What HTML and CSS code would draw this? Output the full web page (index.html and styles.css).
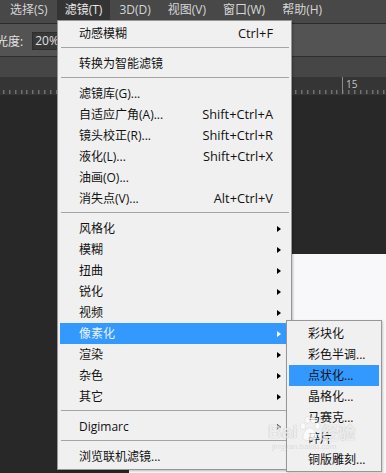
FILE: index.html
```html
<!DOCTYPE html>
<html lang="zh-CN">
<head>
<meta charset="utf-8">
<title>滤镜菜单</title>
<link rel="stylesheet" href="styles.css">
</head>
<body>
<div class="app">
  <div class="menubar">
    <span class="mb-item">选择(S)</span>
    <span class="mb-item active">滤镜(T)</span>
    <span class="mb-item">3D(D)</span>
    <span class="mb-item">视图(V)</span>
    <span class="mb-item">窗口(W)</span>
    <span class="mb-item">帮助(H)</span>
  </div>
  <div class="options">
    <span class="opt-label">光度:</span>
    <span class="opt-input">20%</span>
  </div>
  <div class="doctabs"></div>
  <div class="ruler"><span class="ruler-mark"></span><span class="ruler-num">15</span></div>
  <div class="workspace"><div class="doc"></div></div>

  <div class="menu">
    <div class="mi"><span>动感模糊</span><span class="sc">Ctrl+F</span></div>
    <div class="sep"></div>
    <div class="mi"><span>转换为智能滤镜</span></div>
    <div class="sep"></div>
    <div class="mi"><span>滤镜库(G)...</span></div>
    <div class="mi"><span>自适应广角(A)...</span><span class="sc">Shift+Ctrl+A</span></div>
    <div class="mi"><span>镜头校正(R)...</span><span class="sc">Shift+Ctrl+R</span></div>
    <div class="mi"><span>液化(L)...</span><span class="sc">Shift+Ctrl+X</span></div>
    <div class="mi"><span>油画(O)...</span></div>
    <div class="mi"><span>消失点(V)...</span><span class="sc">Alt+Ctrl+V</span></div>
    <div class="sep"></div>
    <div class="mi"><span>风格化</span><span></span><i class="arrow"></i></div>
    <div class="mi"><span>模糊</span><span></span><i class="arrow"></i></div>
    <div class="mi"><span>扭曲</span><span></span><i class="arrow"></i></div>
    <div class="mi"><span>锐化</span><span></span><i class="arrow"></i></div>
    <div class="mi"><span>视频</span><span></span><i class="arrow"></i></div>
    <div class="mi hl"><span>像素化</span><span></span><i class="arrow"></i></div>
    <div class="mi"><span>渲染</span><span></span><i class="arrow"></i></div>
    <div class="mi"><span>杂色</span><span></span><i class="arrow"></i></div>
    <div class="mi"><span>其它</span><span></span><i class="arrow"></i></div>
    <div class="sep"></div>
    <div class="mi"><span>Digimarc</span><span></span><i class="arrow"></i></div>
    <div class="sep"></div>
    <div class="mi"><span>浏览联机滤镜...</span></div>
  </div>

  <div class="submenu">
    <div class="si">彩块化</div>
    <div class="si">彩色半调...</div>
    <div class="si hl">点状化...</div>
    <div class="si">晶格化...</div>
    <div class="si">马赛克...</div>
    <div class="si">碎片</div>
    <div class="si">铜版雕刻...</div>
  </div>

  <div class="watermark">
    <div class="wm-row">
      <span class="wm-bai">Bai</span>
      <svg class="wm-paw" width="22" height="26" viewBox="0 0 22 26">
        <ellipse cx="4" cy="10" rx="2.6" ry="3.4"/>
        <ellipse cx="8.5" cy="4" rx="2.6" ry="3.4"/>
        <ellipse cx="14" cy="4" rx="2.6" ry="3.4"/>
        <ellipse cx="18.5" cy="10" rx="2.6" ry="3.4"/>
        <path d="M11 12 C7 12 4 18 4 21 C4 24 7 25 11 24 C15 25 18 24 18 21 C18 18 15 12 11 12 Z"/>
      </svg>
      <span class="wm-jy">经验</span>
    </div>
    <div class="wm-url">jingyan.baidu.com</div>
  </div>
</div>
</body>
</html>
```
FILE: styles.css
```css
html, body {
  margin: 0;
  padding: 0;
}
body {
  width: 386px;
  height: 473px;
  overflow: hidden;
  background: #282828;
  font-family: "Open Sans", "Noto Sans CJK SC", sans-serif;
  font-size: 12px;
}
.app {
  position: relative;
  width: 386px;
  height: 473px;
  display: flex;
  flex-direction: column;
}
.menubar {
  height: 24px;
  flex: none;
  box-sizing: border-box;
  background: #484848;
  border-bottom: 1px solid #2b2b2b;
  display: flex;
  align-items: flex-start;
  padding-left: 2px;
  gap: 1px;
}
.mb-item {
  height: 20px;
  line-height: 20px;
  padding: 0 8px;
  color: #d6d6d6;
  white-space: nowrap;
}
.mb-item.active {
  background: #343434;
  color: #e8e8e8;
}
.options {
  height: 33px;
  flex: none;
  box-sizing: border-box;
  background: #535353;
  border-bottom: 1px solid #2e2e2e;
  display: flex;
  align-items: center;
  padding-top: 1px;
}
.opt-label {
  margin-left: -4px;
  color: #e2e2e2;
}
.opt-input {
  margin-left: 9px;
  width: 40px;
  height: 18px;
  box-sizing: border-box;
  background: #383838;
  border: 1px solid #2e2e2e;
  color: #e0e0e0;
  line-height: 16px;
  padding-left: 2px;
}
.doctabs {
  height: 20px;
  flex: none;
  background: #464646;
}
.ruler {
  position: relative;
  height: 18px;
  flex: none;
  background-color: #353535;
  background-image: repeating-linear-gradient(to right, #8c8c8c 0 1px, transparent 1px 5.85px);
  background-size: 100% 4px;
  background-position: 3.3px 13px;
  background-repeat: repeat-x;
}
.ruler-mark {
  position: absolute;
  left: 342px;
  top: 0;
  width: 1px;
  height: 17px;
  background: #8c8c8c;
}
.ruler-num {
  position: absolute;
  left: 346px;
  top: 1px;
  font-size: 10px;
  line-height: 12px;
  color: #c4c4c4;
}
.workspace {
  flex: 1;
  padding: 159px 0 0 129px;
  display: flex;
}
.doc {
  flex: 1;
  background: #f8f8fa;
}

/* Filter menu */
.menu {
  position: absolute;
  left: 57px;
  top: 20px;
  width: 235px;
  box-sizing: border-box;
  background: #f0f0f0;
  border: 1px solid #979797;
  padding: 2px 1px 2px 2px;
  box-shadow: 1px 1px 2px rgba(0, 0, 0, 0.25);
}
.mi {
  height: 21px;
  display: grid;
  grid-template-columns: 1fr auto 17px;
  align-items: center;
  padding-left: 19px;
  color: #111;
  line-height: 21px;
  white-space: nowrap;
}
.sc {
  font-size: 12.8px;
}
.arrow {
  display: block;
  width: 0;
  height: 0;
  margin-left: 4px;
  border-left: 4px solid #000;
  border-top: 3.5px solid transparent;
  border-bottom: 3.5px solid transparent;
}
.hl {
  background: #3399ff;
  color: #e9f1ff;
}
.hl .arrow {
  border-left-color: #ffffff;
}
.sep {
  height: 9px;
  box-sizing: border-box;
  padding: 3px 1px 0 1px;
}
.sep::after {
  content: "";
  display: block;
  border-top: 1px solid #a4a4a4;
}

/* Pixelate submenu */
.submenu {
  position: absolute;
  left: 286px;
  top: 320px;
  width: 96px;
  box-sizing: border-box;
  background: #f0f0f0;
  border: 1px solid #979797;
  padding: 2px 2px 1px 2px;
  box-shadow: 1px 1px 2px rgba(0, 0, 0, 0.2);
}
.si {
  height: 21px;
  line-height: 21px;
  padding-left: 19px;
  color: #111;
  white-space: nowrap;
}

/* Baidu watermark */
.watermark {
  position: absolute;
  left: 268px;
  top: 416px;
  display: flex;
  flex-direction: column;
  align-items: flex-start;
  color: rgba(255, 255, 255, 0.78);
  pointer-events: none;
}
.wm-row {
  display: flex;
  align-items: flex-end;
  gap: 1px;
}
.wm-bai {
  font-family: "Liberation Sans", sans-serif;
  font-weight: bold;
  font-size: 19px;
  line-height: 20px;
  text-shadow: 0 0 1px rgba(0, 0, 0, 0.3);
}
.wm-paw {
  fill: rgba(255, 255, 255, 0.75);
  stroke: rgba(0, 0, 0, 0.12);
  stroke-width: 0.6;
}
.wm-jy {
  font-family: "Noto Sans CJK SC", sans-serif;
  font-weight: bold;
  font-size: 17px;
  line-height: 20px;
  text-shadow: 0 0 1px rgba(0, 0, 0, 0.3);
}
.wm-url {
  font-family: "Liberation Sans", sans-serif;
  font-size: 8px;
  margin-left: 4px;
  color: rgba(180, 180, 180, 0.35);
}
```
